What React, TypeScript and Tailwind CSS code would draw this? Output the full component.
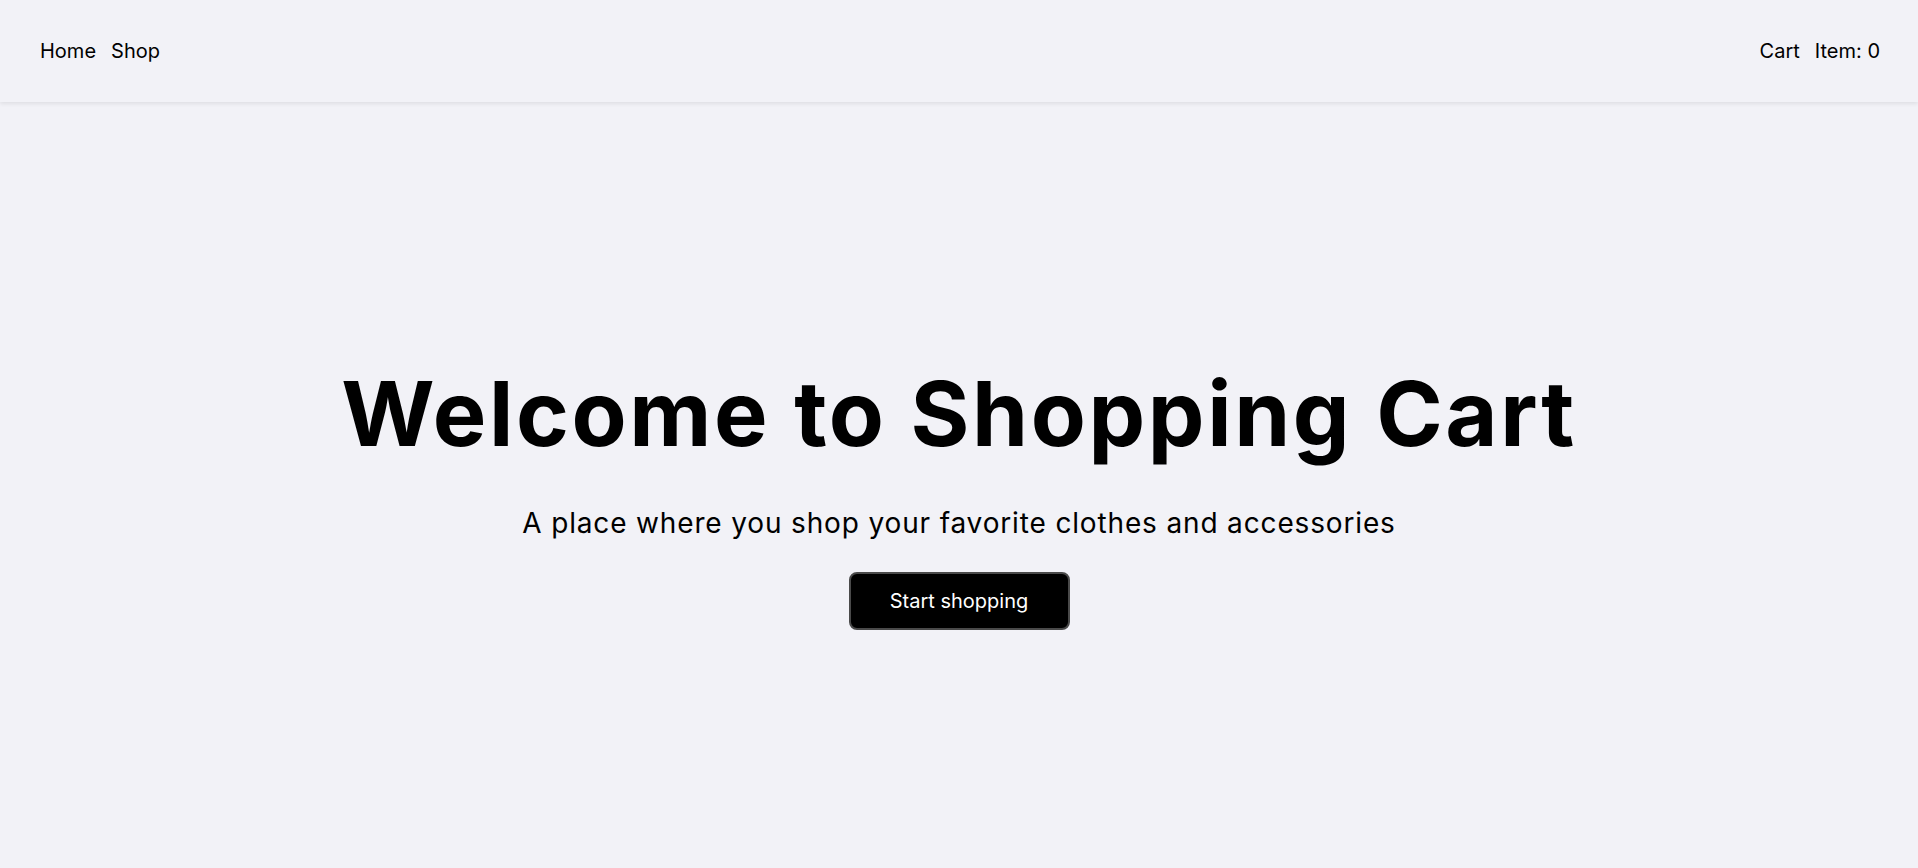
import React from "react";

export default function App() {
  return (
    <div className="min-h-screen h-[868px] flex flex-col bg-[#f2f2f7] text-black font-['Inter',sans-serif]">
      <header className="h-[102px] shrink-0 flex items-center justify-between pl-10 pr-[38px] shadow-[0_2px_4px_rgba(0,0,0,0.08)] relative z-10">
        <nav className="flex items-center gap-[15px] text-[20px]">
          <a>Home</a>
          <a>Shop</a>
        </nav>
        <div className="flex items-center gap-[15px] text-[20px]">
          <a>Cart</a>
          <span>Item: 0</span>
        </div>
      </header>
      <main className="flex-1 flex flex-col items-center pt-[267px]">
        <h1 className="text-[90px] leading-none font-bold tracking-[2.6px] font-['Inter',sans-serif]">
          Welcome to Shopping Cart
        </h1>
        <p className="mt-[50px] text-[28px] leading-none tracking-[0.85px] font-['Inter',sans-serif]">
          A place where you shop your favorite clothes and accessories
        </p>
        <button className="mt-[35px] w-[221px] h-[58px] rounded-[8px] border-2 border-[#4a4a4a] bg-black text-white text-[20px]">
          Start shopping
        </button>
      </main>
    </div>
  );
}
